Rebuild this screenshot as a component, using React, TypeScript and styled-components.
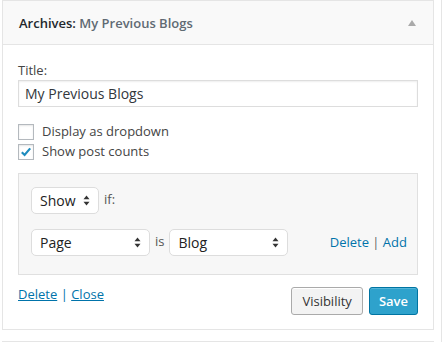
import styled, { createGlobalStyle } from 'styled-components';

const GlobalStyle = createGlobalStyle`
    html, body {
        margin: 0;
        padding: 0;
        background: #fff;
    }
    body {
        font-family: "Open Sans", "Liberation Sans", sans-serif;
        font-size: 13px;
        color: #444;
    }
    * {
        box-sizing: border-box;
    }
`;

const Page = styled.div`
    width: 442px;
    height: 342px;
    overflow: hidden;
    padding-left: 2px;
    border-right: 1px solid #e5e5e5;
`;

const Widget = styled.div`
    width: 432px;
    border: 1px solid #e5e5e5;
    background: #fff;
`;

const WidgetTop = styled.div`
    height: 44px;
    display: flex;
    align-items: center;
    justify-content: space-between;
    padding: 0 17px 0 16px;
    background: #f9f9f9;
    border-bottom: 1px solid #e5e5e5;
`;

const WidgetTitle = styled.h3`
    margin: 0;
    font-size: 13px;
    font-weight: 600;
    color: #23282d;
    line-height: 18px;
`;

const InTitle = styled.span`
    color: #606a73;
`;

const Toggle = styled.span`
    width: 0;
    height: 0;
    border-left: 4px solid transparent;
    border-right: 4px solid transparent;
    border-bottom: 6px solid #aaa;
    margin-top: 1px;
`;

const WidgetInside = styled.div`
    padding: 16px 15px 14px;
`;

const Label = styled.label`
    display: block;
    line-height: 18px;
    margin-bottom: 1px;
    color: #444;
`;

const TextInput = styled.input`
    display: block;
    width: 100%;
    height: 27px;
    margin: 0;
    padding: 0 6px;
    border: 1px solid #ddd;
    box-shadow: inset 0 1px 2px rgba(0, 0, 0, 0.07);
    font-family: "Open Sans", "Liberation Sans", sans-serif;
    font-size: 14px;
    color: #32373c;
    outline: none;
`;

const Checks = styled.div`
    margin-top: 15px;
`;

const CheckRow = styled.div`
    height: 20px;
    display: flex;
    align-items: center;
    gap: 8px;
`;

const Box = styled.span`
    width: 16px;
    height: 16px;
    border: 1px solid #b4b9be;
    background: #fff;
    box-shadow: inset 0 1px 2px rgba(0, 0, 0, 0.1);
    display: flex;
    align-items: center;
    justify-content: center;
`;

const CheckText = styled.span`
    line-height: 18px;
    margin-top: -2px;
    color: #444;
`;

const Conditions = styled.div`
    margin-top: 11px;
    padding: 13px 10px 18px 12px;
    background: #f7f7f7;
    border: 1px solid #e0e0e0;
    display: flex;
    flex-direction: column;
    gap: 15px;
`;

const CondRow = styled.div`
    display: flex;
    align-items: center;
    gap: 5px;
`;

const Word = styled.span`
    color: #555;
    margin-top: -4px;
`;

const SelectBox = styled.div<{ $w: number }>`
    width: ${p => p.$w}px;
    height: 27px;
    display: flex;
    align-items: center;
    justify-content: space-between;
    padding: 0 8px 0 8px;
    background: #fff;
    border: 1px solid #ddd;
    border-radius: 5px;
    font-size: 14px;
    color: #222;
`;

const Links = styled.div`
    margin-left: auto;
    line-height: 18px;
    margin-top: -2px;
    color: #666;
`;

const Link = styled.a<{ $underline?: boolean }>`
    color: #0073aa;
    text-decoration: ${p => (p.$underline ? 'underline' : 'none')};
    cursor: pointer;
`;

const Footer = styled.div`
    margin-top: 12px;
    display: flex;
    align-items: flex-start;
    justify-content: space-between;
`;

const FooterLinks = styled.div`
    line-height: 18px;
    margin-top: -2px;
    color: #0073aa;
`;

const Buttons = styled.div`
    display: flex;
    gap: 6px;
`;

const Button = styled.button<{ $primary?: boolean }>`
    height: 28px;
    padding: 0 ${p => (p.$primary ? 9 : 10)}px;
    border-radius: 3px;
    font-family: "Open Sans", "Liberation Sans", sans-serif;
    font-size: 13px;
    cursor: pointer;
    border: 1px solid ${p => (p.$primary ? '#0074a2' : '#aaa')};
    background: ${p => (p.$primary ? '#2ea2cc' : '#f3f3f3')};
    color: ${p => (p.$primary ? '#fff' : '#333')};
    font-weight: ${p => (p.$primary ? 600 : 400)};
    box-shadow: ${p => (p.$primary ? 'inset 0 1px 0 rgba(120,200,230,.5)' : 'inset 0 1px 0 #fff')};
`;

const NextWidget = styled.div`
    margin-top: 11px;
    width: 432px;
    height: 40px;
    border: 1px solid #e5e5e5;
`;

const Arrows = () => (
    <svg width="7" height="11" viewBox="0 0 7 11">
        <path d="M3.5 0.5 L6.5 4.2 L0.5 4.2 Z" fill="#333" />
        <path d="M3.5 10.5 L6.5 6.8 L0.5 6.8 Z" fill="#333" />
    </svg>
);

const Select = ({ value, width }: { value: string; width: number }) => (
    <SelectBox $w={width}>
        <span>{value}</span>
        <Arrows />
    </SelectBox>
);

const Checkbox = ({ checked, label }: { checked?: boolean; label: string }) => (
    <CheckRow>
        <Box>
            {checked && (
                <svg width="14" height="14" viewBox="0 0 14 14">
                    <path d="M2.8 7.2 L5.6 10 L11.2 3.4" stroke="#1e8cbe" strokeWidth="2.2" fill="none" />
                </svg>
            )}
        </Box>
        <CheckText>{label}</CheckText>
    </CheckRow>
);

const App = () => {
    return (
        <>
            <GlobalStyle />
            <Page>
                <Widget>
                    <WidgetTop>
                        <WidgetTitle>
                            Archives: <InTitle>My Previous Blogs</InTitle>
                        </WidgetTitle>
                        <Toggle />
                    </WidgetTop>
                    <WidgetInside>
                        <Label>Title:</Label>
                        <TextInput defaultValue="My Previous Blogs" />
                        <Checks>
                            <Checkbox label="Display as dropdown" />
                            <Checkbox checked label="Show post counts" />
                        </Checks>
                        <Conditions>
                            <CondRow>
                                <Select value="Show" width={68} />
                                <Word>if:</Word>
                            </CondRow>
                            <CondRow>
                                <Select value="Page" width={119} />
                                <Word>is</Word>
                                <Select value="Blog" width={119} />
                                <Links>
                                    <Link>Delete</Link> | <Link>Add</Link>
                                </Links>
                            </CondRow>
                        </Conditions>
                        <Footer>
                            <FooterLinks>
                                <Link $underline>Delete</Link> | <Link $underline>Close</Link>
                            </FooterLinks>
                            <Buttons>
                                <Button>Visibility</Button>
                                <Button $primary>Save</Button>
                            </Buttons>
                        </Footer>
                    </WidgetInside>
                </Widget>
                <NextWidget />
            </Page>
        </>
    );
};

export default App;
